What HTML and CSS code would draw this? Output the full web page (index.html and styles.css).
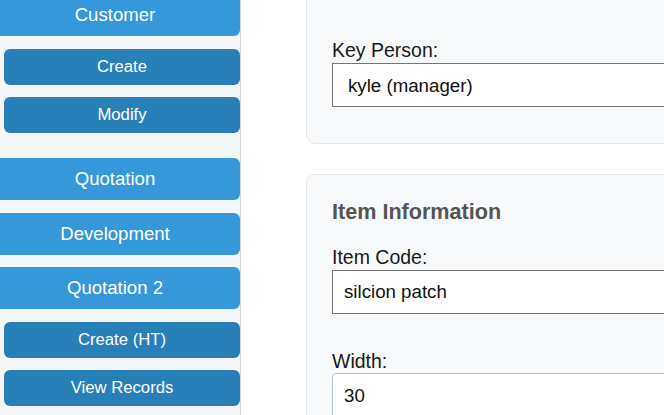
FILE: index.html
```html
<!DOCTYPE html>
<html lang="en">
<head>
<meta charset="utf-8">
<title>Form</title>
<link rel="stylesheet" href="styles.css">
</head>
<body>
<div class="layout">
  <aside class="sidebar">
    <nav class="menu">
      <div class="menu-group">
        <a class="menu-btn">Customer</a>
        <div class="submenu">
          <a class="sub-btn">Create</a>
          <a class="sub-btn">Modify</a>
        </div>
      </div>
      <div class="menu-group">
        <a class="menu-btn">Quotation</a>
      </div>
      <div class="menu-group">
        <a class="menu-btn">Development</a>
      </div>
      <div class="menu-group">
        <a class="menu-btn">Quotation 2</a>
        <div class="submenu">
          <a class="sub-btn">Create (HT)</a>
          <a class="sub-btn">View Records</a>
        </div>
      </div>
    </nav>
  </aside>
  <main class="main">
    <section class="card card-first">
      <div class="field field-last">
        <label class="field-label">Key Person:</label>
        <select class="field-select">
          <option>kyle (manager)</option>
        </select>
      </div>
    </section>
    <section class="card">
      <h3 class="card-title">Item Information</h3>
      <div class="field">
        <label class="field-label">Item Code:</label>
        <input class="field-input" type="text" value="silcion patch">
      </div>
      <div class="field">
        <label class="field-label">Width:</label>
        <input class="field-input field-input-soft" type="text" value="30">
      </div>
    </section>
  </main>
</div>
</body>
</html>
```

FILE: styles.css
```css
* {
  box-sizing: border-box;
}

html, body {
  margin: 0;
  padding: 0;
  height: 415px;
  overflow: hidden;
  background: #ffffff;
  font-family: "Liberation Sans", Arial, sans-serif;
}

.layout {
  display: flex;
  align-items: stretch;
  margin-left: -10px;
  height: 415px;
}

.sidebar {
  width: 251px;
  flex: 0 0 251px;
  background: #f4f7fa;
  border-right: 1px solid #d4d8dc;
}

.menu {
  display: flex;
  flex-direction: column;
  gap: 12.5px;
  margin-top: -6px;
}

.menu-group {
  display: flex;
  flex-direction: column;
}

.menu-btn {
  height: 42px;
  display: flex;
  align-items: center;
  justify-content: center;
  background: #3498db;
  color: #ffffff;
  border-radius: 6px;
  font-size: 18.6px;
}

.submenu {
  display: flex;
  flex-direction: column;
  gap: 12.5px;
  margin: 12.5px 0 12.5px 14px;
}

.sub-btn {
  height: 36px;
  display: flex;
  align-items: center;
  justify-content: center;
  background: #2980b9;
  color: #ffffff;
  border-radius: 6px;
  font-size: 16.7px;
}

.main {
  flex: 1;
  padding-left: 65px;
  min-width: 0;
}

.card {
  width: 700px;
  background: #f8f9fa;
  border: 1px solid #e5e8eb;
  border-radius: 9px;
  padding: 25px 25px 24px;
}

.card-first {
  margin-top: -40px;
  padding-top: 78.4px;
  margin-bottom: 30px;
}

.card-title {
  margin: 0 0 21px;
  font-size: 21.6px;
  line-height: 24.8px;
  font-weight: bold;
  color: #555555;
}

.field {
  margin-bottom: 36px;
}

.field-last {
  margin-bottom: 12px;
}

.field-label {
  display: block;
  font-size: 19.5px;
  line-height: 22.4px;
  color: #1a1a1a;
  margin-bottom: 1px;
}

.field-select,
.field-input {
  display: block;
  width: 100%;
  height: 44.5px;
  margin: 0;
  font-family: "Liberation Sans", Arial, sans-serif;
  font-size: 18.7px;
  color: #111111;
  background: #ffffff;
  border: 1px solid #767676;
  border-radius: 0;
  outline: none;
}

.field-select {
  appearance: none;
  -webkit-appearance: none;
  padding: 0 15px;
}

.field-input {
  padding: 0 11px;
}

.field-input-soft {
  border-color: #aec3de;
  border-radius: 4px;
}
```
